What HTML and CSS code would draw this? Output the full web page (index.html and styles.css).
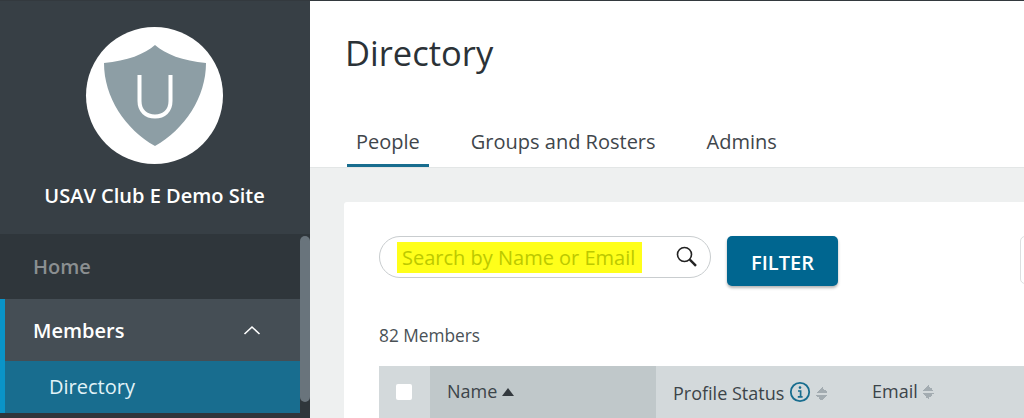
FILE: index.html
```html
<!DOCTYPE html>
<html lang="en">
<head>
    <meta charset="UTF-8">
    <meta name="viewport" content="width=device-width, initial-scale=1.0">
    <title>Directory</title>
    <link rel="stylesheet" href="styles.css">
</head>
<body>
    <div class="app">
        <aside class="sidebar">
            <div class="site">
                <div class="logo">
                    <svg width="104" height="102" viewBox="0 0 104 102">
                        <path d="M52 0C62 9 80 16 103 18C103 52 82 84 52 101C22 84 1 52 1 18C24 16 42 9 52 0Z" fill="#8d9ea5"/>
                        <path d="M36.5 30V56C36.5 66 43 71.5 52 71.5C61 71.5 67.5 66 67.5 56V30" fill="none" stroke="#fff" stroke-width="4"/>
                    </svg>
                </div>
                <div class="site-name">USAV Club E Demo Site</div>
            </div>
            <nav class="nav">
                <div class="scrollbar"></div>
                <a class="nav-home">Home</a>
                <div class="nav-group">
                    <a class="nav-members">
                        Members
                        <svg width="18" height="10" viewBox="0 0 18 10"><path d="M1.5 9L9 2L16.5 9" fill="none" stroke="#fff" stroke-width="1.6"/></svg>
                    </a>
                    <a class="nav-sub">Directory</a>
                </div>
            </nav>
        </aside>

        <main class="main">
            <header class="page-head">
                <h1>Directory</h1>
                <div class="tabs">
                    <a class="tab active">People</a>
                    <a class="tab">Groups and Rosters</a>
                    <a class="tab">Admins</a>
                </div>
            </header>
            <section class="content">
                <div class="card">
                    <div class="toolbar">
                        <div class="search">
                            <span class="search-text"><span class="highlight">Search by Name or Email</span></span>
                            <svg width="24" height="24" viewBox="0 0 24 24"><circle cx="9.5" cy="9.5" r="7" fill="none" stroke="#222" stroke-width="1.6"/><path d="M14.8 14.6L21 20.8" fill="none" stroke="#222" stroke-width="2.4"/></svg>
                        </div>
                        <button class="filter">FILTER</button>
                        <div class="cut-box"></div>
                    </div>
                    <div class="count">82 Members</div>
                    <div class="thead">
                        <div class="th-check"><span class="checkbox"></span></div>
                        <div class="th-name">Name <span class="sort-up"></span></div>
                        <div class="th-status">
                            Profile Status
                            <svg width="22" height="22" viewBox="0 0 22 22"><circle cx="11" cy="11" r="9.2" fill="none" stroke="#186d8f" stroke-width="1.8"/><circle cx="11" cy="6.6" r="1.3" fill="#186d8f"/><path d="M9 10H11.6V15.5M8.8 15.8H13.6" fill="none" stroke="#186d8f" stroke-width="1.7"/></svg>
                            <span class="sort"></span>
                        </div>
                        <div class="th-email">Email <span class="sort"></span></div>
                    </div>
                </div>
            </section>
        </main>
    </div>
</body>
</html>
```

FILE: styles.css
```css
html, body {
    height: 100%;
}
body {
    margin: 0;
    font-family: 'Open Sans', 'Liberation Sans', sans-serif;
    color: #3a4248;
    background-color: #fff;
    overflow: hidden;
}
.app {
    display: flex;
    height: 417px;
    border-top: 1px solid #33393e;
    overflow: hidden;
}

/* sidebar */
.sidebar {
    width: 310px;
    flex: none;
    display: flex;
    flex-direction: column;
    background-color: #2f363b;
}
.site {
    height: 233px;
    flex: none;
    background-color: #373f45;
    text-align: center;
    box-sizing: border-box;
    padding-top: 26px;
}
.logo {
    width: 137px;
    height: 137px;
    margin-left: 86px;
    border-radius: 50%;
    background-color: #fff;
    display: flex;
    justify-content: center;
    align-items: center;
}
.site-name {
    margin-top: 19px;
    padding-right: 1px;
    font-size: 20px;
    line-height: 26px;
    font-weight: 600;
    color: #fff;
}
.nav {
    position: relative;
    flex: 1;
}
.scrollbar {
    position: absolute;
    top: 2px;
    right: 0;
    width: 10px;
    height: 166px;
    border-radius: 5px;
    background-color: #69747c;
}
.nav a {
    display: block;
}
.nav-home {
    height: 65px;
    line-height: 66px;
    padding-left: 33px;
    font-size: 20px;
    font-weight: 600;
    color: #8b8f91;
}
.nav-group {
    width: 300px;
    box-sizing: border-box;
    border-left: 5px solid #0a94c8;
}
.nav .nav-members {
    display: flex;
    justify-content: space-between;
    align-items: center;
    height: 62px;
    padding: 0 39px 0 28px;
    font-size: 20px;
    font-weight: 600;
    color: #fff;
    background-color: #454e55;
}
.nav-sub {
    height: 52px;
    line-height: 52px;
    padding-left: 44px;
    font-size: 20px;
    color: #e2f3f8;
    background-color: #186d8f;
}

/* main */
.main {
    flex: 1;
    min-width: 0;
    display: flex;
    flex-direction: column;
}
.page-head {
    height: 167px;
    flex: none;
    box-sizing: border-box;
    padding-left: 35px;
    border-bottom: 1px solid #e3e6e6;
}
h1 {
    margin: 29px 0 0;
    font-size: 34.5px;
    line-height: 46px;
    font-weight: 400;
    color: #2b3237;
}
.tabs {
    display: flex;
    margin: 35px 0 0 2px;
}
.tab {
    box-sizing: border-box;
    height: 56px;
    line-height: 55px;
    padding: 3px 9px 0;
    font-size: 20px;
    color: #3f464b;
    margin-right: 33px;
}
.tab.active {
    border-bottom: 3px solid #186d8f;
}
.content {
    flex: 1;
    background-color: #eef0f0;
    padding: 34px 0 0 34px;
}
.card {
    height: 300px;
    background-color: #fff;
    border-radius: 3px 0 0 0;
    padding: 34px 0 0 35px;
}
.toolbar {
    display: flex;
    width: 760px;
}
.search {
    box-sizing: border-box;
    width: 332px;
    height: 42px;
    display: flex;
    align-items: center;
    justify-content: space-between;
    padding: 0 11px 0 17px;
    border: 1px solid #c9cdcf;
    border-radius: 21px;
}
.search-text {
    font-size: 20px;
    color: #bcc900;
}
.highlight {
    background-color: #ffff1a;
    padding: 2px 7px 2px 5px;
}
.filter {
    width: 111px;
    height: 50px;
    margin-left: 16px;
    padding: 2px 0 0;
    border: none;
    border-radius: 5px;
    background-color: #006690;
    color: #fff;
    font-family: inherit;
    font-size: 20px;
    font-weight: 600;
    box-shadow: 0 2px 3px rgba(0, 0, 0, 0.3);
}
.cut-box {
    flex: none;
    width: 60px;
    height: 48px;
    margin: 0 -60px 0 182px;
    box-sizing: border-box;
    border: 1px solid #dcdfe0;
    border-radius: 5px;
}
.count {
    margin-top: 37px;
    font-size: 17.3px;
    line-height: 26px;
    color: #4a5156;
}
.thead {
    display: flex;
    height: 60px;
    margin-top: 17px;
    background-color: #d3d9db;
    font-size: 18px;
    color: #3c4449;
}
.th-check {
    width: 51px;
    flex: none;
    padding: 18px 0 0 17px;
    box-sizing: border-box;
}
.checkbox {
    display: block;
    width: 16px;
    height: 16px;
    background-color: #fff;
    border-radius: 2px;
}
.th-name {
    width: 226px;
    flex: none;
    box-sizing: border-box;
    padding: 12px 0 0 17px;
    background-color: #c0c8ca;
    line-height: 26px;
}
.th-status {
    width: 198px;
    flex: none;
    box-sizing: border-box;
    padding: 14px 0 0 17px;
    line-height: 26px;
    display: flex;
    align-items: flex-start;
    gap: 5px;
}
.th-status svg {
    margin-top: 1px;
}
.th-email {
    padding: 12px 0 0 18px;
    line-height: 26px;
}
.sort-up {
    display: inline-block;
    width: 0;
    height: 0;
    vertical-align: 2px;
    border-left: 6px solid transparent;
    border-right: 6px solid transparent;
    border-bottom: 8px solid #33393e;
}
.sort {
    display: inline-block;
    width: 12px;
    height: 14px;
    margin-top: 7px;
    vertical-align: -1px;
    background:
        linear-gradient(to top left, #a3acb1 50%, transparent 50%) left top / 6px 6px no-repeat,
        linear-gradient(to top right, #a3acb1 50%, transparent 50%) right top / 6px 6px no-repeat,
        linear-gradient(to bottom left, #a3acb1 50%, transparent 50%) left bottom / 6px 6px no-repeat,
        linear-gradient(to bottom right, #a3acb1 50%, transparent 50%) right bottom / 6px 6px no-repeat;
}
```
